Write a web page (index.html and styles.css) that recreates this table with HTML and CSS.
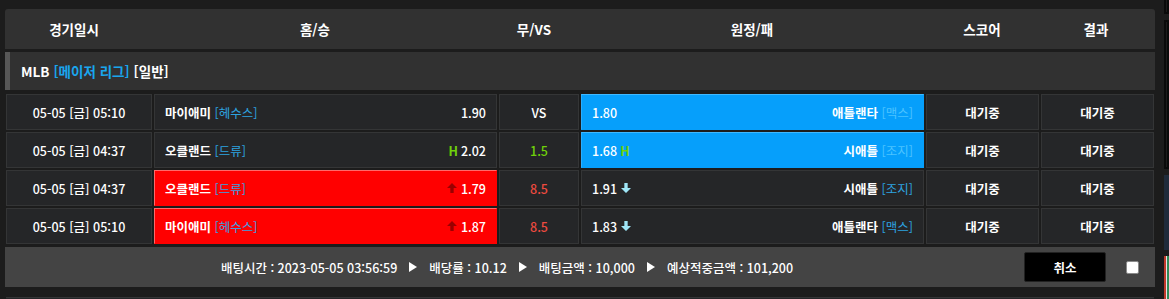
FILE: index.html
```html
<!DOCTYPE html>
<html lang="ko">
<head>
<meta charset="utf-8">
<title>Bet slip</title>
<link rel="stylesheet" href="styles.css">
</head>
<body>
<div class="page">
  <main class="main">
    <div class="thead">
      <div class="th">경기일시</div>
      <div class="th">홈/승</div>
      <div class="th">무/VS</div>
      <div class="th">원정/패</div>
      <div class="th">스코어</div>
      <div class="th">결과</div>
    </div>
    <div class="league">MLB <span class="blue">[메이저 리그]</span> [일반]</div>
    <div class="rows">
      <div class="cell date">05-05 [금] 05:10</div>
      <div class="cell team home"><span class="name">마이애미 <span class="pitcher">[헤수스]</span></span><span class="odds">1.90</span></div>
      <div class="cell vs">VS</div>
      <div class="cell team away sel-blue"><span class="odds">1.80</span><span class="name">애틀랜타 <span class="pitcher">[맥스]</span></span></div>
      <div class="cell status">대기중</div>
      <div class="cell status">대기중</div>

      <div class="cell date">05-05 [금] 04:37</div>
      <div class="cell team home"><span class="name">오클랜드 <span class="pitcher">[드류]</span></span><span class="odds"><span class="h">H</span>2.02</span></div>
      <div class="cell vs green">1.5</div>
      <div class="cell team away sel-blue"><span class="odds">1.68<span class="h">H</span></span><span class="name">시애틀 <span class="pitcher">[조지]</span></span></div>
      <div class="cell status">대기중</div>
      <div class="cell status">대기중</div>

      <div class="cell date">05-05 [금] 04:37</div>
      <div class="cell team home sel-red"><span class="name">오클랜드 <span class="pitcher">[드류]</span></span><span class="odds"><svg class="arr up" width="10" height="10" viewBox="0 0 9 9"><polygon points="4.5,0 9,4.5 6,4.5 6,9 3,9 3,4.5 0,4.5"/></svg>1.79</span></div>
      <div class="cell vs red">8.5</div>
      <div class="cell team away"><span class="odds">1.91<svg class="arr down" width="10" height="10" viewBox="0 0 9 9"><polygon points="3,0 6,0 6,4.5 9,4.5 4.5,9 0,4.5 3,4.5"/></svg></span><span class="name">시애틀 <span class="pitcher">[조지]</span></span></div>
      <div class="cell status">대기중</div>
      <div class="cell status">대기중</div>

      <div class="cell date">05-05 [금] 05:10</div>
      <div class="cell team home sel-red"><span class="name">마이애미 <span class="pitcher">[헤수스]</span></span><span class="odds"><svg class="arr up" width="10" height="10" viewBox="0 0 9 9"><polygon points="4.5,0 9,4.5 6,4.5 6,9 3,9 3,4.5 0,4.5"/></svg>1.87</span></div>
      <div class="cell vs red">8.5</div>
      <div class="cell team away"><span class="odds">1.83<svg class="arr down" width="10" height="10" viewBox="0 0 9 9"><polygon points="3,0 6,0 6,4.5 9,4.5 4.5,9 0,4.5 3,4.5"/></svg></span><span class="name">애틀랜타 <span class="pitcher">[맥스]</span></span></div>
      <div class="cell status">대기중</div>
      <div class="cell status">대기중</div>
    </div>
    <div class="footer">
      <div class="summary">
        <span>배팅시간 : 2023-05-05 03:56:59</span><i class="tri"></i>
        <span>배당률 : 10.12</span><i class="tri"></i>
        <span>배팅금액 : 10,000</span><i class="tri"></i>
        <span>예상적중금액 : 101,200</span>
      </div>
      <button class="cancel" type="button">취소</button>
      <span class="check"></span>
    </div>
    <div class="next"></div>
  </main>
  <aside class="side">
    <div class="sbox small"></div>
    <div class="sbox big"></div>
    <div class="navy"></div>
    <div class="pic"></div>
  </aside>
</div>
</body>
</html>
```
FILE: styles.css
```css
* { box-sizing: border-box; }
html, body { margin: 0; padding: 0; }
body {
  background: #1c1c1c;
  color: #fff;
  font-family: "Noto Sans CJK KR", "Noto Sans", sans-serif;
  font-size: 12.5px;
  font-weight: 500;
  overflow: hidden;
  width: 1169px;
  height: 299px;
}
.page {
  display: flex;
  align-items: flex-start;
  height: 299px;
  overflow: hidden;
}
.main {
  width: 1150px;
  margin-left: 5px;
  padding-top: 9px;
  flex: none;
}
.thead {
  display: grid;
  grid-template-columns: 138px 344px 94px 342px 118px 1fr;
  height: 40px;
  background: #313131;
  border-radius: 3px 3px 0 0;
  padding-right: 4px;
}
.th {
  display: flex;
  align-items: center;
  justify-content: center;
  font-weight: 700;
  font-size: 13.5px;
}
.league {
  margin-top: 3px;
  height: 38px;
  background: #313131;
  border-left: 5px solid #575757;
  display: flex;
  align-items: center;
  gap: 4px;
  padding-left: 11px;
  font-weight: 700;
  font-size: 13.5px;
}
.blue { color: #19a6ee; }
.rows {
  margin-top: 4px;
  padding: 0 1px;
  display: grid;
  grid-template-columns: 146px 343px 80px 343px 113px 113px;
  grid-auto-rows: 36px;
  gap: 2px;
}
.cell {
  background: #252628;
  border: 1px solid #343536;
  display: flex;
  align-items: center;
  justify-content: center;
}
.team {
  justify-content: space-between;
  padding: 0 10px;
}
.name { font-weight: 600; }
.pitcher { font-weight: 400; color: #2da3e0; }
.odds { display: flex; align-items: center; gap: 3px; }
.h { color: #6fd10a; font-weight: 700; }
.green { color: #6fd10a; }
.red { color: #ec4a3f; }
.sel-blue { background: #069ffb; border-color: #3fb8ff #069ffb #069ffb #2aaeff; }
.sel-blue .pitcher { color: #4cc3ff; }
.sel-red { background: #ff0000; border-color: #ff6a6a #ff0000 #ff0000 #ff6a6a; }
.sel-red .pitcher { color: #3a9ee0; }
.arr.up { fill: #9a0000; margin-right: 1px; }
.arr.down { fill: #9fe6f7; margin-left: 1px; }
.status { font-weight: 600; }
.footer {
  margin-top: 3px;
  height: 40px;
  background: #444444;
  display: flex;
  align-items: center;
  padding-right: 16px;
}
.summary {
  flex: 1;
  display: flex;
  justify-content: center;
  align-items: center;
}
.tri {
  display: inline-block;
  width: 0;
  height: 0;
  border-left: 8px solid #fff;
  border-top: 5px solid transparent;
  border-bottom: 5px solid transparent;
  margin: 0 12px;
}
.cancel {
  width: 82px;
  height: 30px;
  margin-left: 15px;
  background: #000;
  color: #fff;
  border: 1px solid #222;
  border-radius: 2px;
  font-family: inherit;
  font-size: 12.5px;
  font-weight: 700;
  padding: 0;
}
.check {
  width: 13px;
  height: 13px;
  margin-left: 20px;
  background: #fff;
  border: 1px solid #8a8a8a;
  border-radius: 2px;
}
.next {
  margin-top: 10px;
  height: 2px;
  background: #252628;
  border-top: 1px solid #343536;
  margin-left: 1px;
  margin-right: 1px;
}
.side {
  width: 5px;
  margin-left: 9px;
  flex: none;
  display: flex;
  flex-direction: column;
}
.sbox { border: 2px solid #0a0a0a; background: #1c1c1c; }
.sbox.small { height: 14px; border-top: none; }
.sbox.big { height: 149px; margin-top: 6px; }
.navy { height: 75px; margin-top: 6px; background: #1f2b3b; }
.pic { height: 43px; margin-top: 6px; background: linear-gradient(90deg, #c0392b 0 2px, #e6e6e6 2px 3px, #2e8b57 3px); }
```
